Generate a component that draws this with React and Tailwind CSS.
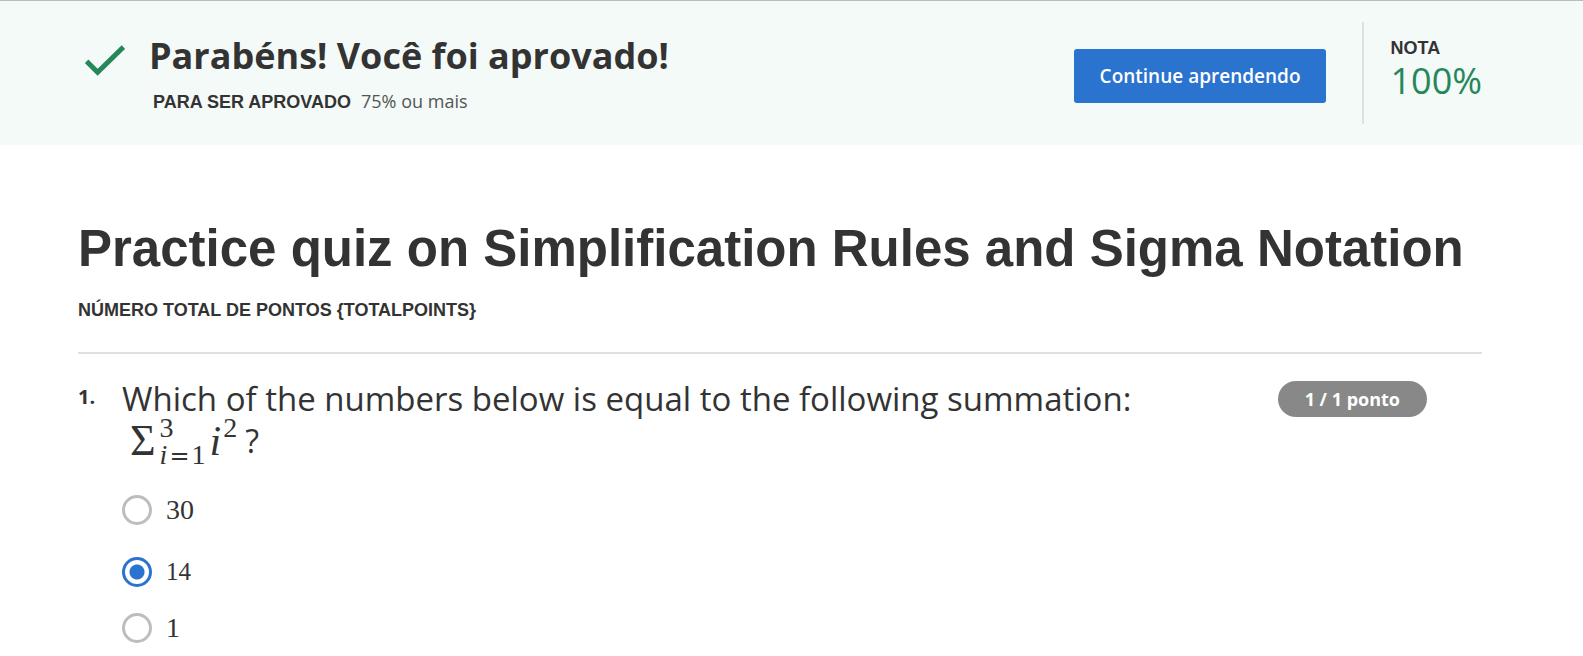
import { useState } from "react";

const SANS = "font-['Open_Sans','Noto_Sans',sans-serif]";
const ARIAL = "font-['Liberation_Sans',Arial,sans-serif]";
const MATH = "font-['Liberation_Serif','Times_New_Roman',serif]";

const options = [
  { value: "30", row: "h-[62px]", size: "text-[28px]" },
  { value: "14", row: "h-[62px]", size: "text-[25px]" },
  { value: "1", row: "h-[50px]", size: "text-[28px]" },
];

function CheckIcon() {
  return (
    <svg viewBox="0 0 40 31" className="h-[31px] w-10 shrink-0" aria-hidden="true">
      <path d="M1.6 16.4 L12.6 27.2 L38.4 2" fill="none" stroke="#25875a" strokeWidth="5" />
    </svg>
  );
}

function ResultBanner() {
  return (
    <header className="flex items-start justify-between border-t border-[#b7bdbb] bg-[#f3faf8] pt-[21px] pr-[101px] pb-[21px] pl-[85px]">
      <div className="flex items-start gap-6">
        <div className="pt-[23px]">
          <CheckIcon />
        </div>
        <div className="pt-[9px]">
          <h2 className={`${SANS} text-[36px] leading-[50px] font-bold`}>Parabéns! Você foi aprovado!</h2>
          <p className="flex items-baseline gap-2.5 pt-1.5 pl-1 leading-7">
            <span className={`${ARIAL} text-[18px] font-bold`}>PARA SER APROVADO</span>
            <span className={`${SANS} text-[18px] text-[#555555]`}>75% ou mais</span>
          </p>
        </div>
      </div>
      <div className="flex items-start">
        <button
          type="button"
          className={`${SANS} mt-[27px] mr-9 h-[54px] rounded-[3px] bg-[#2a73cf] px-[26px] text-[19px] font-semibold text-white`}
        >
          Continue aprendendo
        </button>
        <div className="h-[102px] border-l-2 border-[#dde2e0] pt-[14px] pl-[26px]">
          <p className={`${ARIAL} text-[18px] leading-6 font-bold`}>NOTA</p>
          <p className={`${SANS} text-[36px] leading-[42px] text-[#25875a]`}>100%</p>
        </div>
      </div>
    </header>
  );
}

function Summation() {
  return (
    <span className="flex h-[50px] items-start pt-0.5 pl-2">
      <span className={`${MATH} flex items-start`}>
        <span className="text-[44px] leading-[38px]">Σ</span>
        <span className="flex flex-col pl-1 text-[28px] leading-[27px]">
          <span className="-mt-2">3</span>
          <span className="flex items-baseline">
            <i>i</i>
            <span className="px-0.5 font-['DejaVu_Serif',serif] text-[24px]">=</span>1
          </span>
        </span>
        <i className="pl-1 text-[42px] leading-[38px]">i</i>
        <span className="-mt-2 pl-0.5 text-[28px] leading-[27px]">2</span>
      </span>
      <span className="pl-2 text-[32px] leading-[38px]">?</span>
    </span>
  );
}

function Option({ option, checked, onSelect }) {
  return (
    <label className={`${option.row} flex items-center gap-[14px]`}>
      <input
        type="radio"
        name="answer"
        value={option.value}
        checked={checked}
        onChange={onSelect}
        className="h-[30px] w-[30px] shrink-0 appearance-none rounded-full border-3 border-[#bdbdbd] bg-white checked:border-[#2a73cf] checked:bg-[radial-gradient(circle,#2a73cf_0,#2a73cf_7px,#fff_8px)]"
      />
      <span className={`${MATH} ${option.size}`}>{option.value}</span>
    </label>
  );
}

export default function App() {
  const [answer, setAnswer] = useState("14");

  return (
    <div className="bg-white text-[#333333]">
      <ResultBanner />
      <main className="pt-[74px] pr-[101px] pl-[78px]">
        <h1 className={`${ARIAL} text-[51px] leading-[60px] font-bold`}>
          Practice quiz on Simplification Rules and Sigma Notation
        </h1>
        <p className={`${ARIAL} pt-[19px] text-[18px] leading-6 font-bold`}>NÚMERO TOTAL DE PONTOS {"{TOTALPOINTS}"}</p>
        <section className={`${SANS} mt-[30px] flex items-start border-t-2 border-[#e0e0e0] pt-6`}>
          <span className="w-11 shrink-0 pt-[5px] text-[20px] leading-7 font-bold">1.</span>
          <div className="flex-1">
            <h3 className="text-[33px] leading-[42px]">
              Which of the numbers below is equal to the following summation:
              <Summation />
            </h3>
            <div role="radiogroup" aria-label="Answer" className="pt-[9px]">
              {options.map((option) => (
                <Option
                  key={option.value}
                  option={option}
                  checked={answer === option.value}
                  onSelect={() => setAnswer(option.value)}
                />
              ))}
            </div>
          </div>
          <span className="mt-[3px] mr-[55px] shrink-0 rounded-full bg-[#888888] px-[27px] text-[18px] leading-9 font-bold text-white">
            1 / 1 ponto
          </span>
        </section>
      </main>
    </div>
  );
}
